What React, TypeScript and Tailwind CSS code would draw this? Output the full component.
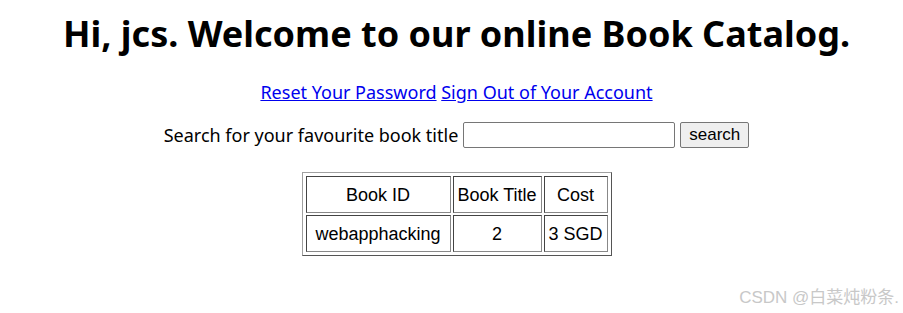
export default function App() {
  const cell =
    "h-[37px] border border-t-[#444] border-l-[#444] border-r-[#888] border-b-[#888] pt-[2px] text-center";

  return (
    <div className="relative w-[903px] h-[313px] overflow-hidden bg-white pl-[10px] text-black font-['Noto_Sans',sans-serif]">
      <h1 className="pt-[12px] text-center text-[36px] font-bold leading-[43px]">
        Hi, jcs. Welcome to our online Book Catalog.
      </h1>

      <p className="mt-[25px] text-center text-[18px] leading-[24px]">
        <a href="#" className="text-[#0000ee] underline">Reset Your Password</a>{" "}
        <a href="#" className="text-[#0000ee] underline">Sign Out of Your Account</a>
      </p>

      <form className="mt-[18px] flex items-center justify-center gap-[5px]">
        <label className="text-[18px] leading-[24px]">Search for your favourite book title</label>
        <input
          type="text"
          className="h-[26px] w-[212px] rounded-[2px] border border-[#767676] bg-white px-1"
        />
        <button
          type="button"
          className="h-[26px] w-[69px] rounded-[2px] border border-[#767676] bg-[#efefef] text-[17px] leading-[20px] font-['Liberation_Sans',sans-serif]"
        >
          search
        </button>
      </form>

      <table className="mx-auto mt-[24px] border-separate border-spacing-[2px] border border-t-[#a0a0a0] border-l-[#a0a0a0] border-r-[#555] border-b-[#555] p-[1px] text-[18px] font-['Liberation_Sans',sans-serif]">
        <tbody>
          <tr>
            <td className={`${cell} w-[145px]`}>Book ID</td>
            <td className={`${cell} w-[89px]`}>Book Title</td>
            <td className={`${cell} w-[64px]`}>Cost</td>
          </tr>
          <tr>
            <td className={cell}>webapphacking</td>
            <td className={cell}>2</td>
            <td className={cell}>3 SGD</td>
          </tr>
        </tbody>
      </table>

      <span className="absolute right-[4px] top-[285px] text-[17px] text-[#c8c8c8] font-['Liberation_Sans','Noto_Sans_CJK_SC',sans-serif]">
        CSDN @白菜炖粉条.
      </span>
    </div>
  );
}
